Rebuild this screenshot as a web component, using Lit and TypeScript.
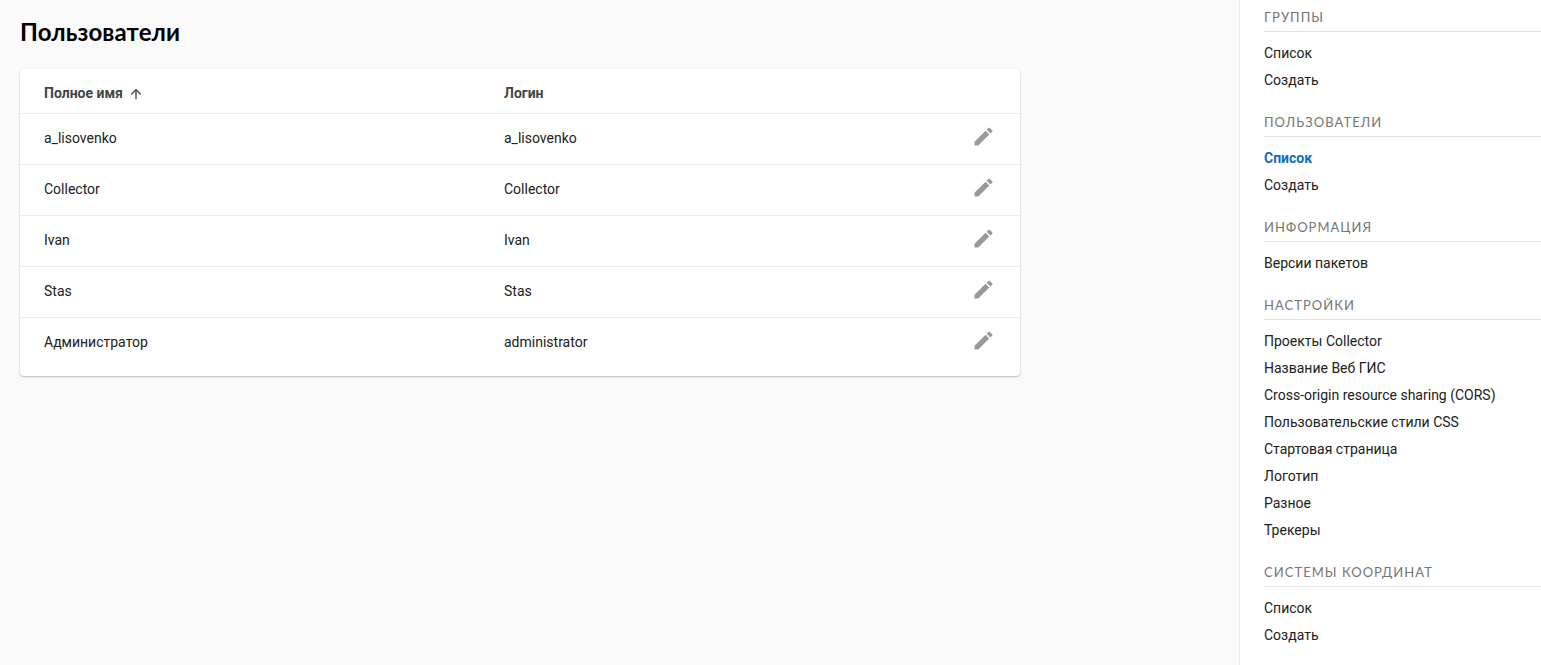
import { LitElement, html, css } from "lit";
import { customElement } from "lit/decorators.js";
import { classMap } from "lit/directives/class-map.js";

interface MenuGroup {
  title: string;
  items: string[];
  active?: number;
}

const GROUPS: MenuGroup[] = [
  { title: "Группы", items: ["Список", "Создать"] },
  { title: "Пользователи", items: ["Список", "Создать"], active: 0 },
  { title: "Информация", items: ["Версии пакетов"] },
  {
    title: "Настройки",
    items: [
      "Проекты Collector",
      "Название Веб ГИС",
      "Cross-origin resource sharing (CORS)",
      "Пользовательские стили CSS",
      "Стартовая страница",
      "Логотип",
      "Разное",
      "Трекеры",
    ],
  },
  { title: "Системы координат", items: ["Список", "Создать"] },
];

const USERS = [
  { name: "a_lisovenko", login: "a_lisovenko" },
  { name: "Collector", login: "Collector" },
  { name: "Ivan", login: "Ivan" },
  { name: "Stas", login: "Stas" },
  { name: "Администратор", login: "administrator" },
];

@customElement("user-table")
export class UserTable extends LitElement {
  static styles = css`
    :host {
      display: block;
      width: 1000px;
      box-sizing: border-box;
      padding-bottom: 8px;
      background: #fff;
      border-radius: 4px;
      box-shadow: 0 1px 2px rgba(0, 0, 0, 0.25), 0 0 1px rgba(0, 0, 0, 0.08);
    }
    .row {
      display: grid;
      grid-template-columns: 460px 1fr 24px;
      align-items: center;
      box-sizing: border-box;
      height: 51px;
      padding: 0 25px 2px 24px;
      border-bottom: 1px solid #ebebeb;
      color: #212121;
    }
    .row:last-child {
      height: 50px;
      padding-bottom: 2px;
      border-bottom: 0;
    }
    .head {
      height: 45px;
      padding-top: 4px;
      padding-bottom: 0;
      color: #444;
      font-weight: 700;
    }
    .sortable {
      display: flex;
      align-items: center;
      gap: 5px;
    }
    .arrow {
      width: 16px;
      height: 16px;
      margin-top: 2px;
      fill: #424b54;
    }
    .edit {
      display: block;
      width: 24px;
      height: 24px;
      margin-bottom: 2px;
      fill: #999;
    }
  `;

  render() {
    return html`
      <div class="row head">
        <div class="sortable">
          Полное имя
          <svg class="arrow" viewBox="0 0 24 24">
            <path d="M4 12l1.41 1.41L11 7.83V20h2V7.83l5.58 5.59L20 12l-8-8-8 8z" />
          </svg>
        </div>
        <div>Логин</div>
      </div>
      ${USERS.map(
        (u) => html`<div class="row">
          <div>${u.name}</div>
          <div>${u.login}</div>
          <svg class="edit" viewBox="-0.5 0.4 24 24">
            <path
              d="M3 17.25V21h3.75L17.81 9.94l-3.75-3.75L3 17.25zM20.71 7.04a.996.996 0 0 0 0-1.41l-2.34-2.34a.996.996 0 0 0-1.41 0l-1.83 1.83 3.75 3.75 1.83-1.83z"
            />
          </svg>
        </div>`
      )}
    `;
  }
}

@customElement("side-menu")
export class SideMenu extends LitElement {
  static styles = css`
    :host {
      display: flex;
      flex-direction: column;
      gap: 18px;
      box-sizing: border-box;
      padding: 7px 0 0 24px;
      background: #fff;
      border-left: 1px solid #ebebeb;
    }
    .title {
      padding-bottom: 4px;
      margin-bottom: 8px;
      border-bottom: 1px solid #e5e5e8;
      color: #757575;
      font: 400 13px/20px Lato, sans-serif;
      letter-spacing: 0.08em;
      text-transform: uppercase;
    }
    .item {
      line-height: 27px;
      color: #212121;
    }
    .active {
      color: #106cbe;
      font-weight: 700;
    }
  `;

  render() {
    return GROUPS.map(
      (g) => html`<div>
        <div class="title">${g.title}</div>
        ${g.items.map(
          (item, i) =>
            html`<div class=${classMap({ item: true, active: g.active === i })}>${item}</div>`
        )}
      </div>`
    );
  }
}

@customElement("app-root")
export class AppRoot extends LitElement {
  static styles = css`
    :host {
      display: grid;
      grid-template-columns: 1fr 302px;
      height: 100vh;
      overflow: hidden;
      background: #fafafa;
      font: 14px/20px Roboto, sans-serif;
    }
    .main {
      padding: 16px 20px;
    }
    .heading {
      margin: 0 0 21px;
      color: #000;
      font: 700 24px/32px Lato, sans-serif;
      letter-spacing: 0.12px;
    }
  `;

  render() {
    return html`
      <main class="main">
        <h1 class="heading">Пользователи</h1>
        <user-table></user-table>
      </main>
      <side-menu></side-menu>
    `;
  }
}
